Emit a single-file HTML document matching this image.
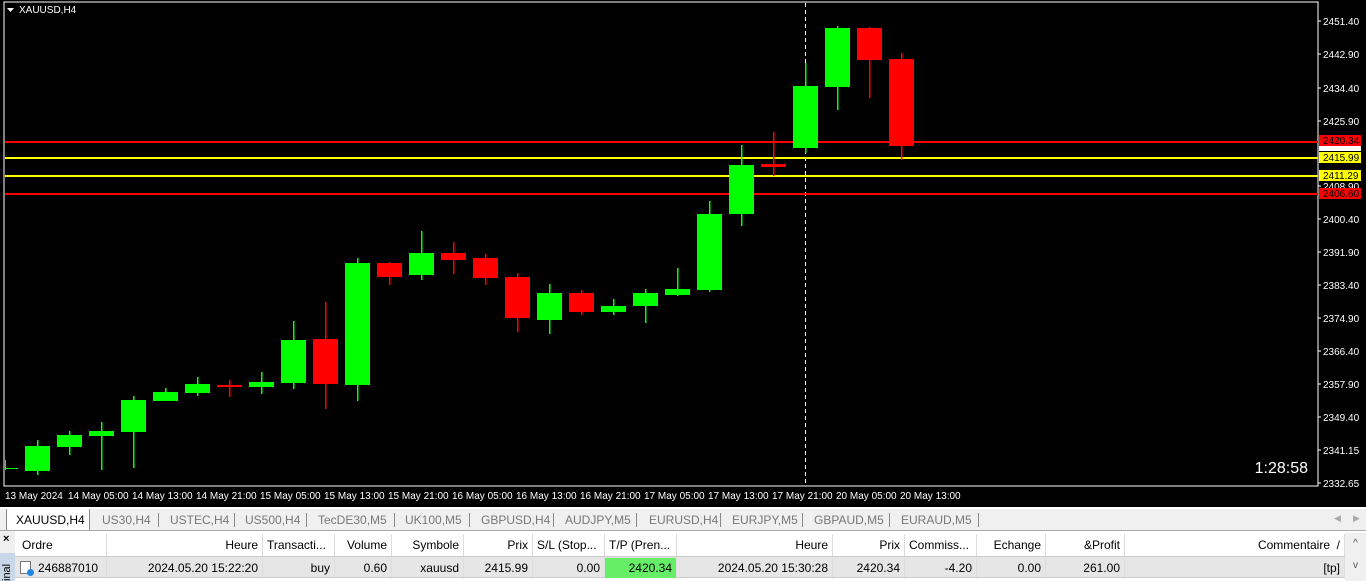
<!DOCTYPE html>
<html><head><meta charset="utf-8"><style>
*{margin:0;padding:0;box-sizing:border-box}
body{width:1366px;height:581px;overflow:hidden;background:#f0f0f0;font-family:"Liberation Sans",sans-serif;position:relative}
#chart{position:absolute;left:0;top:0;width:1366px;height:507px;background:#000}
.tabs{position:absolute;left:0;top:507px;width:1366px;height:24px;background:#f0f0f0;border-top:2px solid #fff;font-size:12px;color:#777}
.tab{position:absolute;top:4px}
.sep{position:absolute;top:4px;width:1px;height:14px;background:#888}
.term{position:absolute;left:0;top:531px;width:1366px;height:50px;background:#fff}
.side{position:absolute;left:0;top:531px;width:15px;height:50px;background:#f0f0f0}
.cell{position:absolute;font-size:12px;color:#000;white-space:nowrap;overflow:hidden;height:22px;line-height:22px;padding:0 4px;border-right:1px solid #ddd}
.r{text-align:right}
</style></head><body>
<div id="chart">
<svg width="1366" height="507" xmlns="http://www.w3.org/2000/svg" font-family="Liberation Sans, sans-serif">
<rect x="4" y="2" width="1314" height="484" fill="none" stroke="#fff" stroke-width="1"/>
<polygon points="7,8 14,8 10.5,12" fill="#fff"/>
<text x="19" y="13" fill="#fff" font-size="10">XAUUSD,H4</text>
<g id="c"></g>
<line x1="805.5" y1="3" x2="805.5" y2="486" stroke="#fff" stroke-dasharray="4,3"/>
<rect x="5" y="141" width="1313" height="2" fill="#f00"/>
<rect x="5" y="157" width="1313" height="2" fill="#ff0"/>
<rect x="5" y="175" width="1313" height="2" fill="#ff0"/>
<rect x="5" y="193" width="1313" height="2" fill="#f00"/>
<g font-size="10" fill="#fff">
<text x="1323" y="25">2451.40</text><text x="1323" y="58">2442.90</text><text x="1323" y="92">2434.40</text><text x="1323" y="125">2425.90</text>
<text x="1323" y="190">2408.90</text><text x="1323" y="223">2400.40</text><text x="1323" y="256">2391.90</text><text x="1323" y="289">2383.40</text>
<text x="1323" y="322">2374.90</text><text x="1323" y="355">2366.40</text><text x="1323" y="388">2357.90</text><text x="1323" y="421">2349.40</text>
<text x="1323" y="454">2341.15</text><text x="1323" y="487">2332.65</text>
</g>
<g stroke="#fff"><line x1="1318" y1="21" x2="1321" y2="21"/><line x1="1318" y1="54" x2="1321" y2="54"/><line x1="1318" y1="88" x2="1321" y2="88"/><line x1="1318" y1="121" x2="1321" y2="121"/><line x1="1318" y1="186" x2="1321" y2="186"/><line x1="1318" y1="219" x2="1321" y2="219"/><line x1="1318" y1="252" x2="1321" y2="252"/><line x1="1318" y1="285" x2="1321" y2="285"/><line x1="1318" y1="318" x2="1321" y2="318"/><line x1="1318" y1="351" x2="1321" y2="351"/><line x1="1318" y1="384" x2="1321" y2="384"/><line x1="1318" y1="417" x2="1321" y2="417"/><line x1="1318" y1="450" x2="1321" y2="450"/><line x1="1318" y1="483" x2="1321" y2="483"/></g>
<rect x="1319" y="144" width="42" height="7" fill="#fff"/>
<rect x="1319" y="135" width="42" height="11" fill="#f00"/><text x="1323" y="144" font-size="10" fill="#000">2420.34</text>
<rect x="1319" y="152" width="42" height="11" fill="#ff0"/><text x="1323" y="161" font-size="10" fill="#000">2415.99</text>
<rect x="1319" y="170" width="42" height="11" fill="#ff0"/><text x="1323" y="179" font-size="10" fill="#000">2411.29</text>
<rect x="1319" y="188" width="42" height="11" fill="#f00"/><text x="1323" y="197" font-size="10" fill="#000">2406.60</text>
<text x="1308" y="473" font-size="16" fill="#fff" text-anchor="end">1:28:58</text>
<g font-size="10" fill="#fff">
<text x="5" y="499">13 May 2024</text><text x="68" y="499">14 May 05:00</text><text x="132" y="499">14 May 13:00</text><text x="196" y="499">14 May 21:00</text><text x="260" y="499">15 May 05:00</text><text x="324" y="499">15 May 13:00</text><text x="388" y="499">15 May 21:00</text><text x="452" y="499">16 May 05:00</text><text x="516" y="499">16 May 13:00</text><text x="580" y="499">16 May 21:00</text><text x="644" y="499">17 May 05:00</text><text x="708" y="499">17 May 13:00</text><text x="772" y="499">17 May 21:00</text><text x="836" y="499">20 May 05:00</text><text x="900" y="499">20 May 13:00</text>
</g>
<g fill="#0f0"><rect x="5" y="460" width="1" height="10"/><rect x="5" y="468" width="13" height="1"/></g>
<g>
<!-- candles: left, wickTop, wickBot, bodyTop, bodyBot, color -->
<rect x="37" y="440" width="1.5" height="35" fill="#0f0"/><rect x="25" y="446" width="25" height="25" fill="#0f0"/>
<rect x="69" y="431" width="1.5" height="24" fill="#0f0"/><rect x="57" y="435" width="25" height="12" fill="#0f0"/>
<rect x="101" y="422" width="1.5" height="48" fill="#0f0"/><rect x="89" y="431" width="25" height="5" fill="#0f0"/>
<rect x="133" y="396" width="1.5" height="72" fill="#0f0"/><rect x="121" y="400" width="25" height="32" fill="#0f0"/>
<rect x="165" y="388" width="1.5" height="8" fill="#0f0"/><rect x="153" y="392" width="25" height="9" fill="#0f0"/>
<rect x="197" y="377" width="1.5" height="19" fill="#0f0"/><rect x="185" y="384" width="25" height="9" fill="#0f0"/>
<rect x="229" y="380" width="1.5" height="17" fill="#f00"/><rect x="217" y="385" width="25" height="2" fill="#f00"/>
<rect x="261" y="372" width="1.5" height="22" fill="#0f0"/><rect x="249" y="382" width="25" height="5" fill="#0f0"/>
<rect x="293" y="321" width="1.5" height="68" fill="#0f0"/><rect x="281" y="340" width="25" height="43" fill="#0f0"/>
<rect x="325" y="302" width="1.5" height="107" fill="#f00"/><rect x="313" y="339" width="25" height="45" fill="#f00"/>
<rect x="357" y="258" width="1.5" height="143" fill="#0f0"/><rect x="345" y="263" width="25" height="122" fill="#0f0"/>
<rect x="389" y="262" width="1.5" height="23" fill="#f00"/><rect x="377" y="263" width="25" height="14" fill="#f00"/>
<rect x="421" y="231" width="1.5" height="49" fill="#0f0"/><rect x="409" y="253" width="25" height="22" fill="#0f0"/>
<rect x="453" y="242" width="1.5" height="32" fill="#f00"/><rect x="441" y="253" width="25" height="7" fill="#f00"/>
<rect x="485" y="254" width="1.5" height="31" fill="#f00"/><rect x="473" y="258" width="25" height="20" fill="#f00"/>
<rect x="517" y="273" width="1.5" height="59" fill="#f00"/><rect x="505" y="277" width="25" height="41" fill="#f00"/>
<rect x="549" y="284" width="1.5" height="50" fill="#0f0"/><rect x="537" y="293" width="25" height="27" fill="#0f0"/>
<rect x="581" y="290" width="1.5" height="25" fill="#f00"/><rect x="569" y="293" width="25" height="19" fill="#f00"/>
<rect x="613" y="299" width="1.5" height="16" fill="#0f0"/><rect x="601" y="306" width="25" height="6" fill="#0f0"/>
<rect x="645" y="289" width="1.5" height="34" fill="#0f0"/><rect x="633" y="293" width="25" height="13" fill="#0f0"/>
<rect x="677" y="268" width="1.5" height="28" fill="#0f0"/><rect x="665" y="289" width="25" height="6" fill="#0f0"/>
<rect x="709" y="201" width="1.5" height="91" fill="#0f0"/><rect x="697" y="214" width="25" height="76" fill="#0f0"/>
<rect x="741" y="145" width="1.5" height="81" fill="#0f0"/><rect x="729" y="165" width="25" height="49" fill="#0f0"/>
<rect x="773" y="132" width="1.5" height="44" fill="#f00"/><rect x="761" y="164" width="25" height="3" fill="#f00"/>
<rect x="805" y="63" width="1.5" height="90" fill="#0f0"/><rect x="793" y="86" width="25" height="62" fill="#0f0"/>
<rect x="837" y="26" width="1.5" height="84" fill="#0f0"/><rect x="825" y="28" width="25" height="59" fill="#0f0"/>
<rect x="869" y="27" width="1.5" height="71" fill="#f00"/><rect x="857" y="28" width="25" height="32" fill="#f00"/>
<rect x="901" y="53" width="1.5" height="107" fill="#f00"/><rect x="889" y="59" width="25" height="87" fill="#f00"/>
</g>
</svg>
</div>
<div class="tabs">
<div style="position:absolute;left:6px;top:0;width:84px;height:22px;background:#fff;border:1px solid #888;border-top:none"></div>
<span class="tab" style="left:16px;color:#000">XAUUSD,H4</span>
<span class="tab" style="left:102px">US30,H4</span><span class="sep" style="left:158px"></span>
<span class="tab" style="left:170px">USTEC,H4</span><span class="sep" style="left:234px"></span>
<span class="tab" style="left:245px">US500,H4</span><span class="sep" style="left:306px"></span>
<span class="tab" style="left:318px">TecDE30,M5</span><span class="sep" style="left:394px"></span>
<span class="tab" style="left:405px">UK100,M5</span><span class="sep" style="left:469px"></span>
<span class="tab" style="left:481px">GBPUSD,H4</span><span class="sep" style="left:553px"></span>
<span class="tab" style="left:565px">AUDJPY,M5</span><span class="sep" style="left:636px"></span>
<span class="tab" style="left:649px">EURUSD,H4</span><span class="sep" style="left:720px"></span>
<span class="tab" style="left:732px">EURJPY,M5</span><span class="sep" style="left:802px"></span>
<span class="tab" style="left:814px">GBPAUD,M5</span><span class="sep" style="left:889px"></span>
<span class="tab" style="left:901px">EURAUD,M5</span><span class="sep" style="left:978px"></span>
<span class="tab" style="left:1334px;font-size:9px;color:#aaa">◀</span><span class="tab" style="left:1353px;font-size:9px;color:#aaa">▶</span>
</div>
<div class="term"></div>
<div class="side"><div style="position:absolute;left:3px;top:2px;font-size:11px;font-weight:bold">×</div><div style="position:absolute;left:0;top:22px;width:15px;height:28px;background:#c8d8e8;font-size:11px;writing-mode:vertical-rl;transform:rotate(180deg);line-height:15px">inal</div></div>
<div style="position:absolute;left:15px;top:533px;width:1330px;height:24px;background:#fff;border-bottom:1px solid #ccc"></div>
<div style="position:absolute;left:15px;top:557px;width:1330px;height:21px;background:#e6e6e6;border-bottom:1px solid #ccc"></div>
<div style="position:absolute;left:605px;top:558px;width:72px;height:20px;background:#66ee66"></div>
<div style="position:absolute;left:1345px;top:533px;width:21px;height:48px;background:#f0f0f0;font-size:10px;color:#555;text-align:center;line-height:22px">^<br>v</div>
<div style="position:absolute;left:0;top:530px;width:1366px;height:1px;background:#aaa"></div>
<!-- header -->
<div class="cell" style="left:15px;top:534px;width:92px;padding-left:7px">Ordre</div>
<div class="cell r" style="left:107px;top:534px;width:156px">Heure</div>
<div class="cell" style="left:263px;top:534px;width:72px">Transacti...</div>
<div class="cell r" style="left:335px;top:534px;width:57px">Volume</div>
<div class="cell r" style="left:392px;top:534px;width:72px">Symbole</div>
<div class="cell r" style="left:464px;top:534px;width:69px">Prix</div>
<div class="cell" style="left:533px;top:534px;width:72px">S/L (Stop...</div>
<div class="cell" style="left:605px;top:534px;width:72px">T/P (Pren...</div>
<div class="cell r" style="left:677px;top:534px;width:156px">Heure</div>
<div class="cell r" style="left:833px;top:534px;width:72px">Prix</div>
<div class="cell" style="left:905px;top:534px;width:72px">Commiss...</div>
<div class="cell r" style="left:977px;top:534px;width:69px">Echange</div>
<div class="cell r" style="left:1046px;top:534px;width:79px">&amp;Profit</div>
<div class="cell r" style="left:1125px;top:534px;width:220px">Commentaire &nbsp;/</div>
<!-- row -->
<div style="position:absolute;left:20px;top:561px;width:11px;height:13px;border:1px solid #777;background:#fff"></div><div style="position:absolute;left:27px;top:569px;width:7px;height:7px;border-radius:50%;background:#1e88e5"></div>
<div class="cell" style="left:15px;top:557px;width:92px;padding-left:23px">246887010</div>
<div class="cell r" style="left:107px;top:557px;width:156px">2024.05.20 15:22:20</div>
<div class="cell r" style="left:263px;top:557px;width:72px">buy</div>
<div class="cell r" style="left:335px;top:557px;width:57px">0.60</div>
<div class="cell r" style="left:392px;top:557px;width:72px">xauusd</div>
<div class="cell r" style="left:464px;top:557px;width:69px">2415.99</div>
<div class="cell r" style="left:533px;top:557px;width:72px">0.00</div>
<div class="cell r" style="left:605px;top:557px;width:72px">2420.34</div>
<div class="cell r" style="left:677px;top:557px;width:156px">2024.05.20 15:30:28</div>
<div class="cell r" style="left:833px;top:557px;width:72px">2420.34</div>
<div class="cell r" style="left:905px;top:557px;width:72px">-4.20</div>
<div class="cell r" style="left:977px;top:557px;width:69px">0.00</div>
<div class="cell r" style="left:1046px;top:557px;width:79px">261.00</div>
<div class="cell r" style="left:1125px;top:557px;width:220px">[tp]</div>
</body></html>
